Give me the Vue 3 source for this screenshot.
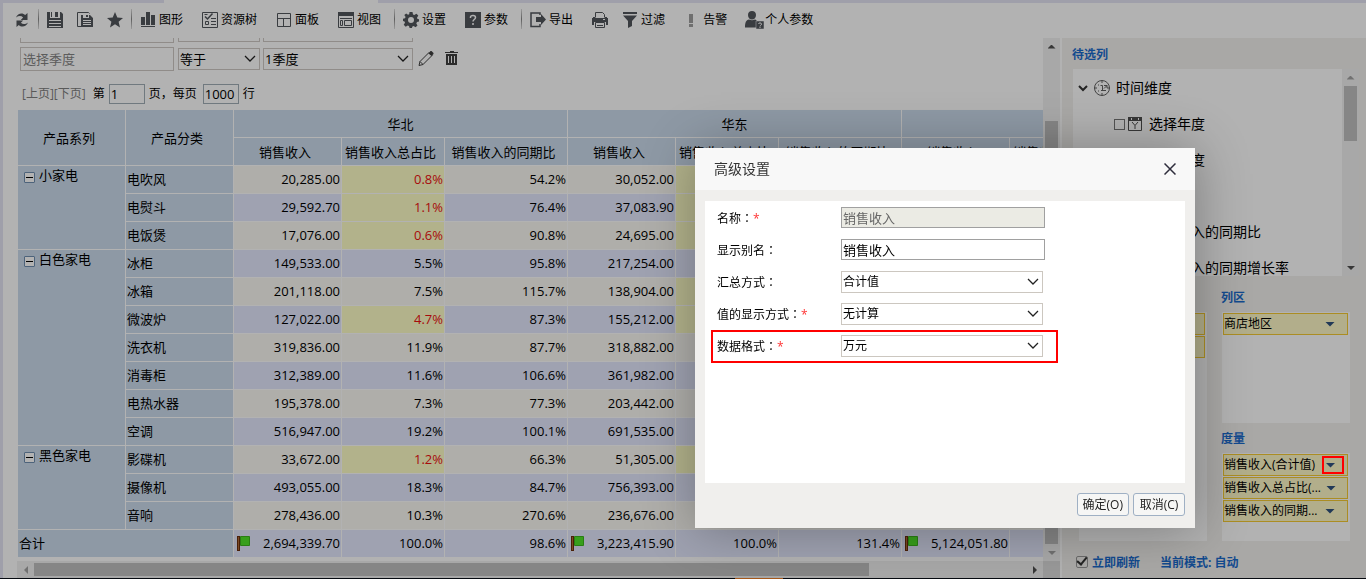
<script setup>
import { ref } from 'vue'

const groups = [
  { name: '小家电', rows: [
    ['电吹风', '20,285.00', '0.8%', '54.2%', '30,052.00', true],
    ['电熨斗', '29,592.70', '1.1%', '76.4%', '37,083.90', true],
    ['电饭煲', '17,076.00', '0.6%', '90.8%', '24,695.00', true],
  ] },
  { name: '白色家电', rows: [
    ['冰柜', '149,533.00', '5.5%', '95.8%', '217,254.00', false],
    ['冰箱', '201,118.00', '7.5%', '115.7%', '138,904.00', true],
    ['微波炉', '127,022.00', '4.7%', '87.3%', '155,212.00', true],
    ['洗衣机', '319,836.00', '11.9%', '87.7%', '318,882.00', false],
    ['消毒柜', '312,389.00', '11.6%', '106.6%', '361,982.00', false],
    ['电热水器', '195,378.00', '7.3%', '77.3%', '203,442.00', false],
    ['空调', '516,947.00', '19.2%', '100.1%', '691,535.00', false],
  ] },
  { name: '黑色家电', rows: [
    ['影碟机', '33,672.00', '1.2%', '66.3%', '51,305.00', true],
    ['摄像机', '493,055.00', '18.3%', '84.7%', '756,393.00', false],
    ['音响', '278,436.00', '10.3%', '270.6%', '236,676.00', false],
  ] },
]
const rows = groups.flatMap((g) =>
  g.rows.map((r, i) => ({
    group: i === 0 ? g.name : '',
    span: g.rows.length,
    label: r[0],
    income: r[1],
    share: r[2],
    low: parseFloat(r[2]) < 5,
    ratio: r[3],
    income2: r[4],
    low2: r[5],
  })),
)
const heads = ['销售收入', '销售收入总占比', '销售收入的同期比', '销售收入', '销售收入总占比', '销售收入的同期比', '销售收入', '销售收入总占比']
const tree = ['选择年度', '选择季度', '', '销售收入的同期比', '销售收入的同期增长率']
const measures = ['销售收入(合计值)', '销售收入总占比(...', '销售收入的同期...']
const quarter = ref('')
const page = ref('1')
const size = ref('1000')
const alias = ref('销售收入')
const live = ref(true)
</script>

<template>
  <div class="page">
    <div class="strip"><span class="tab"></span></div>
    <header class="toolbar">
      <button class="tool" aria-label="刷新">
        <svg viewBox="0 0 16 16"><path d="M2 5.500C3.600 1.200 8.600.200 11.200 3.100L13.500 1v7H6.800l2.300-2.600C7.300 3.600 4.500 3.700 2 5.500zM14 10.500c-1.600 4.300-6.600 5.300-9.200 2.400L2.500 15V8.500h6.700l-2.300 2.300c1.800 1.800 4.600 1.700 7.100-.3z" /></svg>
      </button>
      <i class="sep"></i>
      <button class="tool" aria-label="保存">
        <svg viewBox="0 0 16 16"><path fill-rule="evenodd" d="M0 0h3v6h10V0h1l2 2v14H0zM2 8v1h12V8zm0 3v1h12v-1zM2 14v1h12v-1zM8 0h3v5H8zM4 0h1v5H4z" /></svg>
      </button>
      <button class="tool" aria-label="另存为">
        <svg viewBox="0 0 16 16"><path fill="none" stroke="#52565c" d="M4 14.500H.5V.5h11l1 1" /><path fill-rule="evenodd" d="M4 3h2v3h6V3h1l3 3v9H4zM6 8v1h8V8zm0 2v1h8v-1zM6 12v1h8v-1zM9 3h2v2H9z" /></svg>
      </button>
      <button class="tool" aria-label="收藏">
        <svg viewBox="0 0 16 16"><path d="M8 0l2.300 5.600 5.700.4-4.400 3.700L13 15.500 8 12.300l-5 3.200 1.400-5.800L0 6l5.700-.4z" /></svg>
      </button>
      <i class="sep"></i>
      <button class="tool text">
        <svg viewBox="0 0 16 16"><path d="M1 5h4v8H1zM6 0h4v13H6zM11 3h4v10h-4zM1 14h14v1H1z" /></svg>图形
      </button>
      <button class="tool text">
        <svg viewBox="0 0 16 16"><path fill="none" stroke="#52565c" d="M.5.5h15v15H.5zM3.500 9.500h3v3h-3zM9 9.500h5M9 12.500h5M9 6.500h5M2.500 2.500h3" /><path fill="none" stroke="#52565c" stroke-width="1.500" d="M3 4.500l2.500 2.500 5-5.500" /></svg>资源树
      </button>
      <button class="tool text">
        <svg viewBox="0 0 16 16"><path fill="none" stroke="#52565c" d="M1.500 1.500h13v13h-13zM1.500 6.500h13M7.500 6.500v8" /></svg>面板
      </button>
      <button class="tool text">
        <svg viewBox="0 0 16 16"><path d="M0 0h16v4H0z" /><path fill="none" stroke="#52565c" d="M.5 4v11.500h15V4M2 6.500h12M2.500 8.500h2v5h-2zM6.500 8.500h7v5h-7z" /></svg>视图
      </button>
      <i class="sep"></i>
      <button class="tool text">
        <svg viewBox="0 0 16 16"><path fill-rule="evenodd" d="M6.500 0h3l.5 2.400 1.300.6 2.100-1.300 1.900 1.900L14 5.700l.5 1.200L16 7.200v2.300l-2 .5-.7 1.400 1.200 2-1.900 1.900-2-1.300-1.200.6-.5 1.400h-2.300L6 14l-1.300-.6-2 1.300-2-2L2 10.800 1.500 9.500 0 9V6.800l2-.5.600-1.300-1.300-2L3.200 1.400 5 2.800 6.200 2.200zM8 5a3 3 0 100 6 3 3 0 000-6z" /></svg>设置
      </button>
      <button class="tool text">
        <svg viewBox="0 0 16 16"><path d="M0 0h16v16H0z" /><path fill="none" stroke="#fff" stroke-width="1.500" d="M5.500 6V5C5.500 3 10.500 3 10.500 5.500 10.500 7.500 8 7.500 8 9.500M8 11v2" /></svg>参数
      </button>
      <i class="sep"></i>
      <button class="tool text">
        <svg viewBox="0 0 16 16"><path fill="none" stroke="#52565c" stroke-width="1.500" d="M10 3V1H1v13.500h9V12" /><path d="M6 5h5V2l5 5.500-5 5.500v-3H6z" /></svg>导出
      </button>
      <button class="tool" aria-label="打印">
        <svg viewBox="0 0 16 16"><path d="M0 6h1V5h14v1h1v7h-2v-3H2v3H0z" /><path fill="#fff" d="M3 0h10v6H3z" /><path fill="none" stroke="#52565c" d="M3.500 5.500V.5h7l2 2v3M3.500 10.500h9v5h-9zM5 13.500h6" /><path d="M3 6h10v1H3z" /><path fill="#fff" d="M4 11h8v1H4zM11 7h2v1h-2z" /></svg>
      </button>
      <button class="tool text">
        <svg viewBox="0 0 16 16"><path d="M1 0h14v2H1zM1 3.500h14L10 9v5l-4 2V9z" /></svg>过滤
      </button>
      <button class="tool text">
        <svg viewBox="0 0 16 16"><path fill="#a0a0a0" d="M5 2h4v9H5zM5 12h4v3H5z" /></svg>告警
      </button>
      <button class="tool text">
        <svg viewBox="0 0 16 16"><path d="M6-1C8.500-1 10 .5 10 3S8.500 7.500 6 7.500 2 5.500 2 3 3.500-1 6-1zM-1 15.500c0-5 1-7.500 4-8 2 1 4 1 6 0 1 .2 2 1 2 2v6z" /><path d="M10 9h8v8h-8z" stroke="#fff" stroke-width=".5" /><path fill="none" stroke="#fff" d="M12.500 12c0-1.500 3-1.500 3 0s-1.500 1-1.500 2.500M14 15v1" /></svg>个人参数
      </button>
    </header>

    <div class="work">
      <main class="main">
        <div class="view">
          <div class="filters">
            <div class="filter">
              <span class="ghost name"></span><span class="ghost op"></span><span class="ghost val"></span>
            </div>
            <div class="filter">
              <input v-model="quarter" class="name" placeholder="选择季度" aria-label="选择季度" />
              <span class="pick op"><select aria-label="运算符"><option>等于</option></select><svg viewBox="0 0 12 8"><path d="M1 1l5 5 5-5" /></svg></span>
              <span class="pick val"><select aria-label="季度"><option>1季度</option></select><svg viewBox="0 0 12 8"><path d="M1 1l5 5 5-5" /></svg></span>
              <button class="mini" aria-label="编辑"><svg viewBox="0 0 16 16"><path fill="none" stroke="#404040" d="M1 14.500l1-4L11 1.500l3 3L5 13.500zM2 10.500l3 3" /><path fill="#404040" d="M10.500 2.500L12.500 0h1L15.500 2v1l-2 2z" /></svg></button>
              <button class="mini bin" aria-label="删除"><svg viewBox="0 0 16 16"><path fill="#404040" fill-rule="evenodd" d="M1 1h5V0h4v1h4v1H1zM2 3h11v11H2zM4 5v7h1V5zm3 0v7h1V5zm3 0v7h1V5z" /></svg></button>
            </div>
          </div>
          <div class="pager">
            <a href="#">[上页]</a><a href="#">[下页]</a>
            <label for="pg">第</label><input id="pg" v-model="page" />
            <label for="sz">页，每页</label><input id="sz" v-model="size" /><span>行</span>
          </div>
          <table>
            <colgroup>
              <col class="c1" /><col class="c1" />
              <template v-for="n in 3" :key="n"><col class="c1" /><col class="c2" /><col class="c3" /></template>
            </colgroup>
            <thead>
              <tr>
                <th rowspan="2">产品系列</th><th rowspan="2">产品分类</th>
                <th colspan="3" class="area">华北</th><th colspan="3" class="area">华东</th><th colspan="3"></th>
              </tr>
              <tr><th v-for="(h, i) in heads" :key="i">{{ h }}</th><th></th></tr>
            </thead>
            <tbody>
              <tr v-for="r in rows" :key="r.label">
                <th v-if="r.group" :rowspan="r.span" class="series"><button class="fold" aria-label="收起"></button>{{ r.group }}</th>
                <th class="kind">{{ r.label }}</th>
                <td>{{ r.income }}</td>
                <td :class="{ low: r.low }">{{ r.share }}</td>
                <td>{{ r.ratio }}</td>
                <td>{{ r.income2 }}</td>
                <td :class="{ low: r.low2 }"></td>
                <td></td><td></td><td></td><td></td>
              </tr>
              <tr>
                <th colspan="2" class="kind">合计</th>
                <td><span class="total"><svg viewBox="0 0 14 16"><path fill="#6b2f0c" d="M0 1h3v15H0z" /><path fill="#b06a35" d="M1 2h1v13H1z" /><path fill="#50e428" stroke="#3bb51c" d="M3.500 1.500h9v9h-9z" /></svg>2,694,339.70</span></td>
                <td>100.0%</td><td>98.6%</td>
                <td><span class="total"><svg viewBox="0 0 14 16"><path fill="#6b2f0c" d="M0 1h3v15H0z" /><path fill="#b06a35" d="M1 2h1v13H1z" /><path fill="#50e428" stroke="#3bb51c" d="M3.500 1.500h9v9h-9z" /></svg>3,223,415.90</span></td>
                <td>100.0%</td><td>131.4%</td>
                <td><span class="total"><svg viewBox="0 0 14 16"><path fill="#6b2f0c" d="M0 1h3v15H0z" /><path fill="#b06a35" d="M1 2h1v13H1z" /><path fill="#50e428" stroke="#3bb51c" d="M3.500 1.500h9v9h-9z" /></svg>5,124,051.80</span></td>
                <td></td><td></td>
              </tr>
            </tbody>
          </table>
        </div>
        <div class="vbar"><i class="up dark"></i><span class="spacer"></span><b></b><i class="down"></i></div>
        <div class="hbar"><i class="left"></i><b></b><span class="spacer"></span><i class="right dark"></i></div>
        <div class="corner"></div>
      </main>

      <aside class="side">
        <h2>待选列</h2>
        <div class="source">
          <ul class="tree">
            <li class="root">
              <svg class="chev" viewBox="0 0 10 8"><path d="M1 2l4 4 4-4" /></svg>
              <svg class="clock" viewBox="0 0 16 16"><circle cx="8" cy="8" r="7.500" /><path d="M8 0v3M8 13v3M0 8h3M13 8h3M4 5h1M4 11h1M6.500 5.500h2v5M7 10.500h5M10 5.500h3v2.500M10 8.500l3-3" /></svg>
              时间维度
            </li>
            <li v-for="(t, i) in tree" :key="i" :class="{ deep: i < 3 }">
              <template v-if="i < 3"><input :id="'t' + i" type="checkbox" /><svg class="cal" viewBox="0 0 14 14"><path fill="none" stroke="#505050" d="M.5 1v12.500h13V1M4 5l3 3.500L10 5M7 8.500V12" /><path fill="#505050" fill-rule="evenodd" d="M0 0h14v4H0zM3 1v2h1V1zm7 0v2h1V1z" /></svg></template>
              <label :for="'t' + i">{{ t }}</label>
            </li>
          </ul>
          <div class="vbar"><i class="up"></i><b class="short"></b><span class="spacer"></span><i class="down dark"></i></div>
        </div>
        <div class="zones">
          <div class="zone">
            <h2></h2>
            <div class="box"><div class="chip"></div><div class="chip"></div></div>
          </div>
          <div class="zone">
            <h2>列区</h2>
            <div class="box cols"><div class="chip"><span>商店地区</span><button aria-label="菜单"></button></div></div>
            <h2 class="second">度量</h2>
            <div class="box">
              <div v-for="(m, i) in measures" :key="m" class="chip"><span>{{ m }}</span><button :class="{ marked: i === 0 }" aria-label="菜单"></button></div>
            </div>
          </div>
        </div>
        <div class="status">
          <input id="live" v-model="live" type="checkbox" /><label for="live">立即刷新</label><span>当前模式: 自动</span>
        </div>
      </aside>
    </div>
    <div class="taskbar"><i></i></div>

    <div class="mask"></div>
    <section class="dialog" role="dialog" aria-labelledby="dt">
      <header><h1 id="dt">高级设置</h1><button aria-label="关闭"><svg viewBox="0 0 12 12"><path d="M.5.5l11 11M11.500.5l-11 11" /></svg></button></header>
      <div class="form">
        <div class="field"><label for="f1">名称<u>：</u><em>*</em></label><input id="f1" value="销售收入" disabled /></div>
        <div class="field"><label for="f2">显示别名<u>：</u></label><input id="f2" v-model="alias" /></div>
        <div class="field"><label for="f3">汇总方式<u>：</u></label><span class="pick"><select id="f3"><option>合计值</option></select><svg viewBox="0 0 12 8"><path d="M1 1l5 5 5-5" /></svg></span></div>
        <div class="field"><label for="f4">值的显示方式<u>：</u><em>*</em></label><span class="pick"><select id="f4"><option>无计算</option></select><svg viewBox="0 0 12 8"><path d="M1 1l5 5 5-5" /></svg></span></div>
        <div class="field marked"><label for="f5">数据格式<u>：</u><em>*</em></label><span class="pick"><select id="f5"><option>万元</option></select><svg viewBox="0 0 12 8"><path d="M1 1l5 5 5-5" /></svg></span></div>
      </div>
      <footer><button>确定(O)</button><button>取消(C)</button></footer>
    </section>
  </div>
</template>

<style>
body { margin: 0; overflow: hidden; }
</style>

<style scoped>
* { box-sizing: border-box; }
.page { height: 100vh; display: flex; flex-direction: column; position: relative; background: #fff; border-left: 3px solid #e4e4f4; color: #000; font: 12px/16px "Open Sans", "Noto Sans CJK SC", sans-serif; }
button, input, select { font: inherit; color: inherit; margin: 0; padding: 0; border: 0; background: none; border-radius: 0; }
h1, h2, ul { margin: 0; padding: 0; list-style: none; }
.strip { height: 3px; flex: none; background: #e4e4f4; padding-left: 161px; }
.tab { display: block; width: 214px; height: 3px; background: #fff; }

.toolbar { height: 35px; flex: none; display: flex; align-items: center; padding: 0 0 1px 11px; white-space: nowrap; }
.tool { display: flex; align-items: center; gap: 3px; margin-right: 14px; flex: none; height: 24px; }
.tool.text { margin-right: 19px; }
.tool svg { width: 16px; height: 16px; fill: #52565c; overflow: visible; }
.sep { width: 1px; height: 20px; margin: 6px 8px 0 -6px; background: linear-gradient(#ddd, #888, #ddd); flex: none; align-self: flex-start; }

.work { flex: 1; min-height: 0; display: flex; }
.main { flex: 1; min-width: 0; display: grid; grid-template: 1fr 17px / 1fr 17px; padding: 0 2px 0 14px; }
.view { overflow: hidden; min-height: 0; min-width: 0; padding-left: 1px; }
.filters { margin-top: -19px; padding-left: 2px; display: flex; flex-direction: column; gap: 4px; }
.filter { display: flex; align-items: center; height: 24px; }
.ghost, .filter input, .filter .pick { border: 1px solid #cfc9c4; height: 22px; }
.filter .name { width: 154px; height: 24px; margin-right: 4px; padding-left: 2px; font-size: 13px; }
.filter .op { width: 82px; margin-right: 3px; }
.filter .val { width: 150px; }
.filter select { font-size: 13px; }
.filter input::placeholder { color: #858585; opacity: 1; }
.pick { position: relative; display: inline-flex; background: #fff; }
.pick select { appearance: none; width: 100%; height: 100%; padding-left: 1px; }
.pick svg { position: absolute; right: 3px; top: 50%; width: 12px; height: 8px; margin-top: -4px; fill: none; stroke: #222; stroke-width: 1.250; pointer-events: none; }
.mini { margin-left: 5px; height: 16px; width: 16px; }
.mini.bin { margin-left: 10px; }
.mini svg { display: block; width: 16px; height: 16px; }
.pager { display: flex; align-items: center; height: 20px; margin: 13px 0 6px 4px; white-space: nowrap; }
.pager a { color: #808080; text-decoration: none; }
.pager label { margin: 0 4px; }
.pager a + label { margin-left: 7px; }
.pager input + label { margin-right: 6px; }
.pager input { width: 36px; height: 20px; border: 1px solid #a1aeb6; padding-left: 1px; font-size: 13px; }
.pager input:last-of-type { margin-right: 4px; }
table { table-layout: fixed; border-collapse: separate; border-spacing: 0; width: 1218px; font-size: 13px; line-height: 18px; }
.c1 { width: 108px; }
.c2 { width: 103px; }
.c3 { width: 123px; }
th, td { height: 28px; padding: 0 1px 1px; border: 0 solid #fff; border-width: 0 1px 1px 0; white-space: nowrap; overflow: hidden; }
th { background: #ccdced; font-weight: 400; }
thead th { padding: 0 5px 0 0; }
thead th.area { padding: 0; }
td { background: #e4e9fe; text-align: right; }
tbody tr:nth-child(odd) td { background: #fbf9f4; }
tbody tr td.low, tbody tr:nth-child(odd) td.low { background: #ffffc8; color: #f01010; }
tbody tr:last-child td { background: #e4e9fe; }
.kind { text-align: left; }
.series { text-align: left; vertical-align: top; padding: 0 0 0 6px; }
.fold { width: 11px; height: 11px; border: 1px solid #6f8fb0; border-radius: 1px; background: linear-gradient(#000, #000) center / 7px 1px no-repeat #fff; vertical-align: -2px; margin-right: 4px; }
.total { display: flex; justify-content: space-between; align-items: center; }
.total svg { width: 14px; height: 16px; margin-left: 2px; }

.vbar, .hbar { background: #f1f1f1; display: flex; align-items: center; }
.vbar { width: 17px; flex-direction: column; }
.vbar b { width: 13px; height: 423px; background: #c1c1c1; }
.vbar b.short { height: 55px; }
.hbar b { width: 835px; height: 13px; background: #c1c1c1; }
.spacer { flex: 1; }
.vbar i, .hbar i { width: 17px; height: 17px; flex: none; display: grid; place-items: center; color: #a3a3a3; }
.vbar i.dark, .hbar i.dark { color: #505050; }
.vbar i::before, .hbar i::before { content: ""; width: 8px; height: 4px; background: currentColor; clip-path: polygon(0 100%, 50% 0, 100% 100%); }
.down::before { transform: rotate(180deg); }
.left::before { transform: rotate(-90deg); }
.right::before { transform: rotate(90deg); }
.corner { background: #dcdcdc; }

.side { width: 304px; flex: none; background: #f2f1ee; padding: 9px 7px 0 10px; display: flex; flex-direction: column; }
h2 { font-size: 12px; line-height: 16px; font-weight: 700; color: #1a6bcc; }
.source { display: flex; height: 207px; flex: none; margin: 6px 0 0 1px; background: #fff; overflow: hidden; }
.source .vbar { height: 207px; flex: none; }
.tree { flex: 1; font-size: 14px; padding-top: 1px; }
.tree li { height: 36px; display: flex; align-items: center; padding-left: 76px; white-space: nowrap; }
.tree li.root { padding-left: 5px; }
.tree li.deep { padding-left: 41px; }
.chev { width: 10px; height: 8px; margin-right: 6px; fill: none; stroke: #333; stroke-width: 2; }
.clock { width: 16px; height: 16px; margin-right: 6px; fill: none; stroke: #606060; }
.tree input { appearance: none; width: 11px; height: 11px; border: 1px solid #777; margin-right: 3px; }
.cal { width: 14px; height: 14px; margin-right: 7px; }
.zones { display: flex; gap: 15px; padding-left: 7px; margin-top: 14px; height: 251px; }
.zone { width: 128px; display: flex; flex-direction: column; }
.zone h2 { height: 16px; margin: 0 0 6px -1px; flex: none; }
.zone h2.second { margin-top: 8px; }
.box { flex: 1; background: #fff; padding: 1px; display: flex; flex-direction: column; gap: 1px; }
.box.cols { flex: none; height: 111px; }
.chip { width: 125px; height: 22px; flex: none; border: 1px solid #f5ca33; background: #fffac8; display: flex; align-items: center; white-space: nowrap; }
.chip span { flex: 1; }
.chip button { width: 22px; height: 18px; margin-right: 6px; display: grid; place-items: center; }
.chip button::before { content: ""; width: 10px; height: 5px; background: #31527d; clip-path: polygon(0 0, 100% 0, 50% 100%); }
.chip button.marked { outline: 2px solid #f00; outline-offset: -2px; position: relative; z-index: 2; margin-right: 3px; padding-right: 5px; }
.chip button.marked::before { background: #22395a; }
.status { display: flex; align-items: center; height: 20px; margin: 12px 0 0 4px; font-weight: 700; color: #1a6bcc; }
.status input { width: 12px; height: 12px; margin: 0 4px 3px 0; appearance: none; border: 1px solid #999; border-radius: 2px; display: grid; place-items: center; }
.status input:checked::before { content: ""; width: 8px; height: 4px; margin-bottom: 3px; border: solid #333; border-width: 0 0 2px 2px; transform: rotate(-50deg); }
.status span { margin-left: 20px; }
.taskbar { height: 1px; flex: none; background: #0a0f18; margin-left: -3px; padding-left: 735px; }
.taskbar i { display: block; height: 1px; width: 48px; background: #f08028; }

.mask { position: fixed; inset: 0; background: rgba(0, 0, 0, .3); z-index: 1; }
.dialog { position: absolute; right: 171px; bottom: 51px; width: 500px; z-index: 3; background: #f0efed; box-shadow: 1px 1px 50px rgba(0, 0, 0, .3); padding-bottom: 12px; }
.dialog header { height: 42px; background: #f8f8f8; display: flex; align-items: center; justify-content: space-between; padding: 0 19px; }
.dialog h1 { font-size: 14px; line-height: 20px; font-weight: 400; color: #333; }
.dialog header button { width: 12px; height: 12px; }
.dialog header svg { display: block; width: 12px; height: 12px; stroke: #2e2d3c; stroke-width: 1.500; }
.form { margin: 11px 10px 0; height: 282px; background: #fff; padding-top: 1px; }
.field { display: flex; align-items: center; height: 32px; padding-left: 12px; }
.field label { width: 124px; }
.field u { text-decoration: none; font-family: "Noto Sans CJK TC", sans-serif; }
.field em { font-style: normal; color: #f33; }
.field input { width: 204px; height: 21px; margin-bottom: 1px; border: 1px solid #a0a0a0; padding-left: 1px; font-size: 13px; }
.field input:disabled { background: #ebebe4; color: #666; }
.field .pick { width: 202px; height: 22px; border: 1px solid #ccc7c0; }
.field.marked { width: 347px; height: 33px; margin-left: 6px; padding: 0 0 1px 4px; border: 2px solid #f00; }
.dialog footer { display: flex; justify-content: flex-end; gap: 4px; padding: 10px 10px 0; }
.dialog footer button { height: 23px; min-width: 52px; padding: 0 5px; border: 1px solid #9fb0c4; border-radius: 3px; background: #f6f6f5; color: #222; }
</style>
